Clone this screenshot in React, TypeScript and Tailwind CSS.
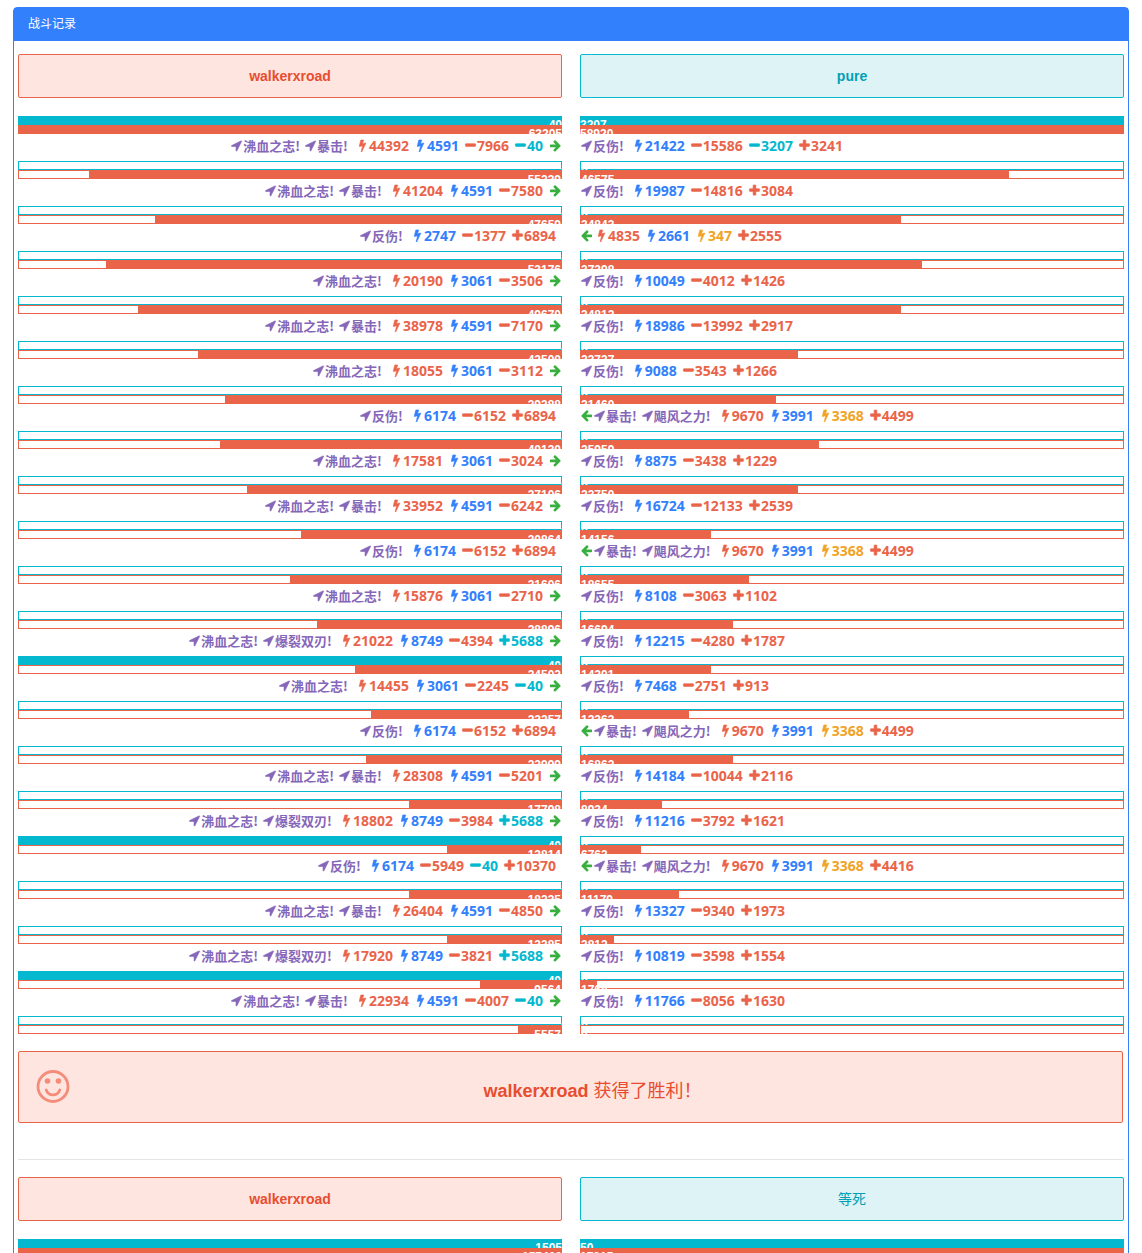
import type { ReactNode } from "react";

type Kind = "tag" | "hit" | "magic" | "real" | "lose" | "gain" | "shieldLose" | "shieldGain" | "right" | "left";
type Item = { kind: Kind; text: string };
type Bars = { hp: number; shield: number };
type Round = { left: string; right: string; hp: [number, number]; shield: number };

const PATHS = {
  arrow:
    "M1593 349l-640 1280q-17 35-57 35-5 0-15-2-22-5-35.5-22.5t-13.5-39.5v-576h-576q-22 0-39.5-13.5t-22.5-35.5 4-42 29-30l1280-640q13-7 29-7 27 0 45 19 15 14 18.5 34.5t-6.5 39.5z",
  bolt:
    "M1333 566q18 20 7 44l-540 1157q-13 25-42 25-4 0-14-2-17-5-25.5-19t-4.5-30l197-808-406 101q-4 1-12 1-18 0-31-11-18-15-13-39l201-825q4-14 16-23t28-9h328q19 0 32 12.5t13 29.5q0 8-5 18l-171 463 396-98q8-2 12-2 19 0 34 15z",
  minus:
    "M1600 736v192q0 40-28 68t-68 28h-1216q-40 0-68-28t-28-68v-192q0-40 28-68t68-28h1216q40 0 68 28t28 68z",
  plus:
    "M1600 736v192q0 40-28 68t-68 28h-416v416q0 40-28 68t-68 28h-192q-40 0-68-28t-28-68v-416h-416q-40 0-68-28t-28-68v-192q0-40 28-68t68-28h416v-416q0-40 28-68t68-28h192q40 0 68 28t28 68v416h416q40 0 68 28t28 68z",
  right:
    "M1600 960q0 54-37 91l-651 651q-39 37-91 37-51 0-90-37l-75-75q-38-38-38-91t38-91l293-293h-704q-52 0-84.5-37.5t-32.5-90.5v-128q0-53 32.5-90.5t84.5-37.5h704l-293-294q-38-36-38-90t38-90l75-75q38-38 90-38 53 0 91 38l651 651q37 35 37 90z",
};

const KINDS: Record<Kind, { icon: keyof typeof PATHS; style: string }> = {
  tag: { icon: "arrow", style: "text-[#8666b8]" },
  hit: { icon: "bolt", style: "text-[#ea644a]" },
  magic: { icon: "bolt", style: "text-[#3280fc]" },
  real: { icon: "bolt", style: "text-[#f1a325]" },
  lose: { icon: "minus", style: "text-[#ea644a]" },
  gain: { icon: "plus", style: "text-[#ea644a]" },
  shieldLose: { icon: "minus", style: "text-[#03b8cf]" },
  shieldGain: { icon: "plus", style: "text-[#03b8cf]" },
  right: { icon: "right", style: "text-[#38b03f]" },
  left: { icon: "right", style: "text-[#38b03f]" },
};

const CODES: Record<string, Kind> = {
  "@": "tag",
  h: "hit",
  m: "magic",
  r: "real",
  "-": "lose",
  "+": "gain",
  s: "shieldLose",
  S: "shieldGain",
  ">": "right",
  "<": "left",
};

function parse(line: string): Item[] {
  return line.split(" ").map((word) => ({ kind: CODES[word[0]], text: word.slice(1) }));
}

const ROUNDS: Round[] = [
  { left: "@沸血之志! @暴击! h44392 m4591 -7966 s40 >", right: "@反伤! m21422 -15586 s3207 +3241", hp: [55239, 46575], shield: 0 },
  { left: "@沸血之志! @暴击! h41204 m4591 -7580 >", right: "@反伤! m19987 -14816 +3084", hp: [47659, 34843], shield: 0 },
  { left: "@反伤! m2747 -1377 +6894", right: "< h4835 m2661 r347 +2555", hp: [53176, 37398], shield: 0 },
  { left: "@沸血之志! h20190 m3061 -3506 >", right: "@反伤! m10049 -4012 +1426", hp: [49670, 34812], shield: 0 },
  { left: "@沸血之志! @暴击! h38978 m4591 -7170 >", right: "@反伤! m18986 -13992 +2917", hp: [42500, 23737], shield: 0 },
  { left: "@沸血之志! h18055 m3061 -3112 >", right: "@反伤! m9088 -3543 +1266", hp: [39388, 21460], shield: 0 },
  { left: "@反伤! m6174 -6152 +6894", right: "< @暴击! @飓风之力! h9670 m3991 r3368 +4499", hp: [40130, 25959], shield: 0 },
  { left: "@沸血之志! h17581 m3061 -3024 >", right: "@反伤! m8875 -3438 +1229", hp: [37106, 23750], shield: 0 },
  { left: "@沸血之志! @暴击! h33952 m4591 -6242 >", right: "@反伤! m16724 -12133 +2539", hp: [30864, 14156], shield: 0 },
  { left: "@反伤! m6174 -6152 +6894", right: "< @暴击! @飓风之力! h9670 m3991 r3368 +4499", hp: [31606, 18655], shield: 0 },
  { left: "@沸血之志! h15876 m3061 -2710 >", right: "@反伤! m8108 -3063 +1102", hp: [28896, 16694], shield: 0 },
  { left: "@沸血之志! @爆裂双刃! h21022 m8749 -4394 S5688 >", right: "@反伤! m12215 -4280 +1787", hp: [24502, 14201], shield: 40 },
  { left: "@沸血之志! h14455 m3061 -2245 s40 >", right: "@反伤! m7468 -2751 +913", hp: [22257, 12363], shield: 0 },
  { left: "@反伤! m6174 -6152 +6894", right: "< @暴击! @飓风之力! h9670 m3991 r3368 +4499", hp: [22999, 16862], shield: 0 },
  { left: "@沸血之志! @暴击! h28308 m4591 -5201 >", right: "@反伤! m14184 -10044 +2116", hp: [17798, 8934], shield: 0 },
  { left: "@沸血之志! @爆裂双刃! h18802 m8749 -3984 S5688 >", right: "@反伤! m11216 -3792 +1621", hp: [13814, 6763], shield: 40 },
  { left: "@反伤! m6174 -5949 s40 +10370", right: "< @暴击! @飓风之力! h9670 m3991 r3368 +4416", hp: [18235, 11179], shield: 0 },
  { left: "@沸血之志! @暴击! h26404 m4591 -4850 >", right: "@反伤! m13327 -9340 +1973", hp: [13385, 3812], shield: 0 },
  { left: "@沸血之志! @爆裂双刃! h17920 m8749 -3821 S5688 >", right: "@反伤! m10819 -3598 +1554", hp: [9564, 1768], shield: 40 },
  { left: "@沸血之志! @暴击! h22934 m4591 -4007 s40 >", right: "@反伤! m11766 -8056 +1630", hp: [5557, 0], shield: 0 },
];

function Icon({ kind }: { kind: Kind }) {
  const icon = KINDS[kind].icon;
  return (
    <svg
      viewBox="0 0 1792 1792"
      className={kind === "left" ? "size-[13px] shrink-0 -scale-x-100" : "size-[13px] shrink-0"}
      fill="currentColor"
      stroke="currentColor"
      strokeWidth={icon === "right" ? 0 : 80}
      aria-hidden="true"
    >
      <path d={PATHS[icon]} />
    </svg>
  );
}

function gapAfter(item: Item, next?: Item) {
  if (item.text === "") return next && next.kind !== "tag" ? "mr-[2px]" : "";
  if (item.kind === "tag") return next?.kind === "tag" ? "mr-1" : "mr-2";
  return !next || next.kind === "right" ? "mr-[6px]" : "mr-[5px]";
}

function Entry({ item, next }: { item: Item; next?: Item }) {
  return (
    <span className={`flex items-center ${KINDS[item.kind].style} ${gapAfter(item, next)}`}>
      <Icon kind={item.kind} />
      {item.text !== "" && (
        <span
          className={
            item.kind === "tag"
              ? "font-['Noto_Sans_CJK_SC',sans-serif] text-[13px] leading-[18px]"
              : "text-sm leading-[18px]"
          }
        >
          {item.text}
        </span>
      )}
    </span>
  );
}

function Line({ text, side }: { text: string; side: "left" | "right" }) {
  const items = parse(text);
  return (
    <div
      className={`flex h-[27px] items-center pb-1 font-['Open_Sans','Noto_Sans_CJK_SC',sans-serif] font-bold whitespace-nowrap ${side === "left" ? "justify-end" : "justify-start"}`}
    >
      {items.map((item, i) => (
        <Entry key={i} item={item} next={items[i + 1]} />
      ))}
    </div>
  );
}

function Bar({ value, max, tone, side, bare }: { value: number; max: number; tone: "shield" | "hp"; side: "left" | "right"; bare: boolean }) {
  const percent = Math.floor((value / max) * 100);
  const ring = tone === "shield" ? "inset-ring-[#03b8cf]" : "inset-ring-[#ea644a]";
  const fill = tone === "shield" ? "bg-[#03b8cf]" : "bg-[#ea644a]";
  return (
    <div className={`flex h-[9px] overflow-hidden ${side === "left" ? "justify-end" : ""} ${bare ? "" : `p-px inset-ring-1 ${ring}`}`}>
      <div
        className={`h-full text-xs leading-[18px] font-bold whitespace-nowrap text-white ${fill} ${side === "left" ? "text-right" : "text-left"}`}
        style={{ width: `${percent}%` }}
      >
        {value}
      </div>
    </div>
  );
}

function BarPair({ now, max, side, bare = false }: { now: Bars; max: Bars; side: "left" | "right"; bare?: boolean }) {
  return (
    <div>
      <Bar value={now.shield} max={max.shield} tone="shield" side={side} bare={bare} />
      <Bar value={now.hp} max={max.hp} tone="hp" side={side} bare={bare} />
    </div>
  );
}

function Columns({ children }: { children: ReactNode }) {
  return <div className="grid grid-cols-2 gap-x-[18px]">{children}</div>;
}

function Names({ left, right }: { left: ReactNode; right: ReactNode }) {
  return (
    <div className="mb-[18px]">
      <Columns>
        <div className="rounded-xs border border-[#ea644a] bg-[#ffe5e0] py-3 text-center text-sm leading-[18px] text-[#e84d30]">
          {left}
        </div>
        <div className="rounded-xs border border-[#03b8cf] bg-[#ddf3f5] py-3 text-center text-sm leading-[18px] text-[#039fb5]">
          {right}
        </div>
      </Columns>
    </div>
  );
}

function Smile() {
  return (
    <svg viewBox="0 0 34 34" className="size-[34px] shrink-0" fill="none" stroke="currentColor" aria-hidden="true">
      <circle cx="17" cy="16.5" r="15" strokeWidth="2.8" />
      <circle cx="11.5" cy="11" r="2.8" fill="currentColor" stroke="none" />
      <circle cx="22.5" cy="11" r="2.8" fill="currentColor" stroke="none" />
      <path d="M10.2 20a7.2 7.2 0 0 0 13.6 0" strokeWidth="2.8" strokeLinecap="round" />
    </svg>
  );
}

const LEFT_MAX: Bars = { hp: 63205, shield: 40 };
const RIGHT_MAX: Bars = { hp: 58920, shield: 3207 };
const NEXT_LEFT: Bars = { hp: 157400, shield: 1505 };
const NEXT_RIGHT: Bars = { hp: 17815, shield: 50 };

export default function App() {
  return (
    <main className="h-screen overflow-hidden bg-white px-[13px] pt-[7px] font-['Liberation_Sans','Noto_Sans_CJK_SC',sans-serif]">
      <section className="rounded-[4px] border border-[#3280fc]">
        <h1 className="bg-[#3280fc] px-[14px] py-[7px] text-xs leading-[19px] text-white">战斗记录</h1>
        <div className="px-1 pt-[13px]">
          <Names left={<strong>walkerxroad</strong>} right={<strong>pure</strong>} />
          <Columns>
            <BarPair now={LEFT_MAX} max={LEFT_MAX} side="left" bare />
            <BarPair now={RIGHT_MAX} max={RIGHT_MAX} side="right" bare />
          </Columns>
          {ROUNDS.map((round, i) => (
            <Columns key={i}>
              <Line text={round.left} side="left" />
              <Line text={round.right} side="right" />
              <BarPair now={{ hp: round.hp[0], shield: round.shield }} max={LEFT_MAX} side="left" />
              <BarPair now={{ hp: round.hp[1], shield: 0 }} max={RIGHT_MAX} side="right" />
            </Columns>
          ))}
          <div className="mt-[17px] mr-px flex items-center rounded-xs border border-[#ea644a] bg-[#ffe5e0] px-[17px] py-[18px] text-[#e84d30]">
            <div className="text-[#f48c7a]">
              <Smile />
            </div>
            <p className="flex-1 pt-2 pl-[10px] text-center text-lg leading-[26px]">
              <strong>walkerxroad</strong> 获得了胜利！
            </p>
          </div>
          <hr className="mt-9 mb-[17px] border-[#e5e5e5]" />
          <Names left={<strong>walkerxroad</strong>} right="等死" />
          <Columns>
            <BarPair now={NEXT_LEFT} max={NEXT_LEFT} side="left" bare />
            <BarPair now={NEXT_RIGHT} max={NEXT_RIGHT} side="right" bare />
          </Columns>
        </div>
      </section>
    </main>
  );
}
